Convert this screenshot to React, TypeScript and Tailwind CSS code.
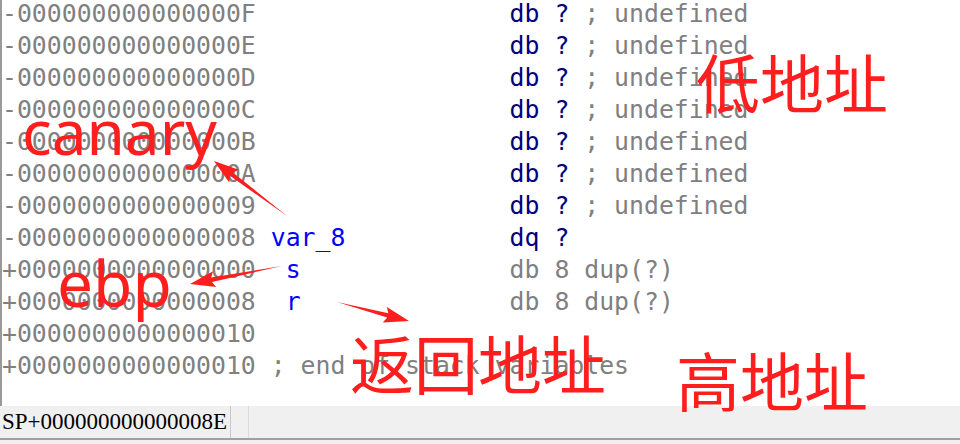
import React from "react";

const gray = "text-[#808080]";
const navy = "text-[#000080]";
const blue = "text-[#0000ff]";

type Row = { off: string; name?: string; kind?: "undef" | "dq" | "dup" | "end" };

const rows: Row[] = [
  { off: "-000000000000000F", kind: "undef" },
  { off: "-000000000000000E", kind: "undef" },
  { off: "-000000000000000D", kind: "undef" },
  { off: "-000000000000000C", kind: "undef" },
  { off: "-000000000000000B", kind: "undef" },
  { off: "-000000000000000A", kind: "undef" },
  { off: "-0000000000000009", kind: "undef" },
  { off: "-0000000000000008", name: " var_8", kind: "dq" },
  { off: "+0000000000000000", name: "  s", kind: "dup" },
  { off: "+0000000000000008", name: "  r", kind: "dup" },
  { off: "+0000000000000010" },
  { off: "+0000000000000010", kind: "end" },
];

function Arrow({ x1, y1, x2, y2 }: { x1: number; y1: number; x2: number; y2: number }) {
  // tapered shaft + head, drawn from tail (x1,y1) to tip (x2,y2)
  const dx = x2 - x1;
  const dy = y2 - y1;
  const len = Math.hypot(dx, dy);
  const ux = dx / len;
  const uy = dy / len;
  const nx = -uy;
  const ny = ux;
  const headLen = 22;
  const headW = 8;
  const bx = x2 - ux * headLen;
  const by = y2 - uy * headLen;
  const p = (x: number, y: number) => `${x.toFixed(1)},${y.toFixed(1)}`;
  const pts = [
    p(x1, y1),
    p(bx + nx * 2.2, by + ny * 2.2),
    p(bx + nx * headW - ux * 3, by + ny * headW - uy * 3),
    p(x2, y2),
    p(bx - nx * headW - ux * 3, by - ny * headW - uy * 3),
    p(bx - nx * 2.2, by - ny * 2.2),
  ].join(" ");
  return <polygon points={pts} fill="#ff1e1e" />;
}

function Line({ row }: { row: Row }) {
  const pad = 17 + (row.name ? row.name.length : 0);
  const gap = " ".repeat(Math.max(1, 34 - pad));
  return (
    <div className="h-[32px] leading-[28px] whitespace-pre">
      <span className={gray}>{row.off}</span>
      {row.name && <span className={blue}>{row.name}</span>}
      {row.kind === "undef" && (
        <>
          <span>{gap}</span>
          <span className={navy}>db ?</span>
          <span className={gray}> ; undefined</span>
        </>
      )}
      {row.kind === "dq" && (
        <>
          <span>{gap}</span>
          <span className={navy}>dq ?</span>
        </>
      )}
      {row.kind === "dup" && (
        <>
          <span>{gap}</span>
          <span className={gray}>db 8 dup(?)</span>
        </>
      )}
      {row.kind === "end" && <span className={gray}> ; end of stack variables</span>}
    </div>
  );
}

export default function App() {
  return (
    <div className="w-[960px] h-[444px] bg-white flex flex-col overflow-hidden relative">
      <div className="h-[406px] border-l-2 border-[#9a9a9a] font-['DejaVu_Sans_Mono',monospace] text-[24.8px]">
        {rows.map((r, i) => (
          <Line key={i} row={r} />
        ))}
      </div>
      <div className="h-[32px] bg-[#f0f0f0] flex items-center font-['Liberation_Serif',serif] text-[23px] text-black">
        <div className="pl-[2px] w-[231px] h-full flex items-center border-r border-[#c8c8c8]">
          SP+000000000000008E
        </div>
        <div className="w-[18px] h-full border-r border-[#dcdcdc]" />
      </div>
      <div className="h-[2px] bg-[#a0a0a0]" />
      <div className="flex-1 bg-[#f0f0f0]" />

      {/* red annotations */}
      <div className="absolute inset-0 pointer-events-none text-[#ff1e1e]">
        <span className="absolute left-[22px] top-[100px] text-[62px] leading-none font-['Noto_Sans',sans-serif]">
          canary
        </span>
        <span className="absolute left-[57px] top-[251px] text-[64px] leading-none font-['Noto_Sans',sans-serif]">
          ebp
        </span>
        <span className="absolute left-[696px] top-[48px] text-[64px] leading-none font-['Noto_Sans_CJK_SC',sans-serif]">
          低地址
        </span>
        <span className="absolute left-[350px] top-[329px] text-[64px] leading-none font-['Noto_Sans_CJK_SC',sans-serif]">
          返回地址
        </span>
        <span className="absolute left-[676px] top-[346px] text-[64px] leading-none font-['Noto_Sans_CJK_SC',sans-serif]">
          高地址
        </span>
        <svg className="absolute inset-0" width="960" height="444" viewBox="0 0 960 444">
          <Arrow x1={287} y1={216} x2={214} y2={161} />
          <Arrow x1={282} y1={266} x2={190} y2={284} />
          <Arrow x1={337} y1={302} x2={409} y2={321} />
        </svg>
      </div>
    </div>
  );
}
